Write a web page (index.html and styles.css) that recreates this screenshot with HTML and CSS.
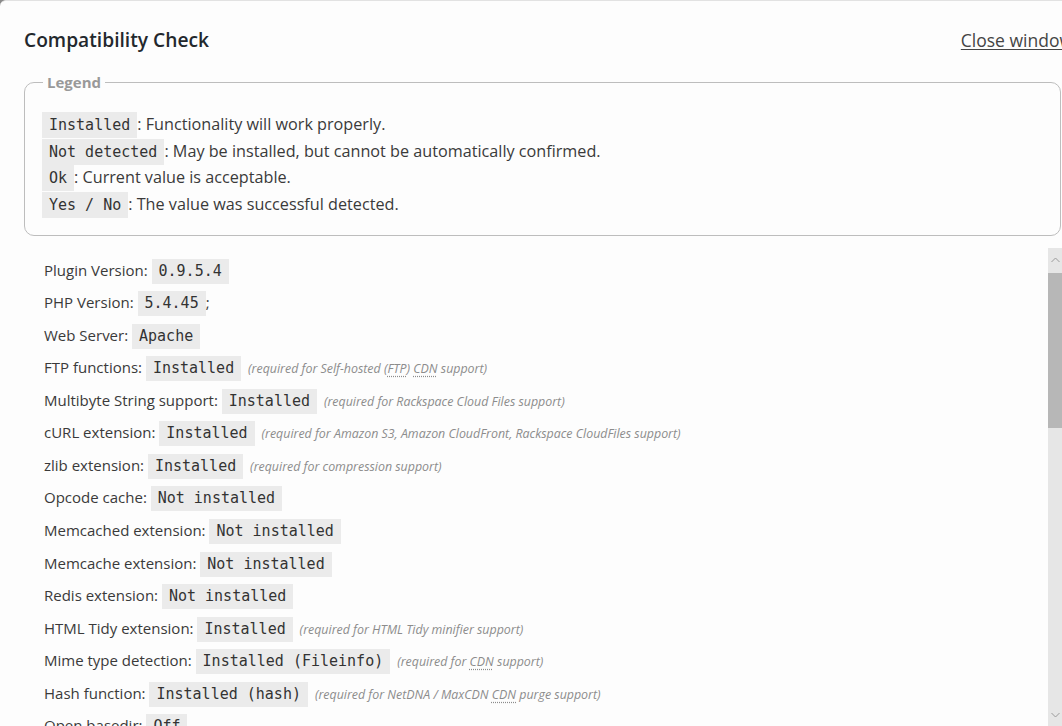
FILE: index.html
```html
<!DOCTYPE html>
<html lang="en">
<head>
<meta charset="utf-8">
<title>Compatibility Check</title>
<link rel="stylesheet" href="styles.css">
</head>
<body>
<div class="dialog">
  <header class="head">
    <h1 class="title">Compatibility Check</h1>
    <a class="close" href="#">Close window</a>
  </header>
  <fieldset class="legend-box">
    <legend class="legend-title">Legend</legend>
    <div class="legend-row"><code class="val">Installed</code>: Functionality will work properly.</div>
    <div class="legend-row"><code class="val">Not detected</code>: May be installed, but cannot be automatically confirmed.</div>
    <div class="legend-row"><code class="val">Ok</code>: Current value is acceptable.</div>
    <div class="legend-row"><code class="val">Yes / No</code>: The value was successful detected.</div>
  </fieldset>
  <div class="scroll">
    <ul class="checks">
      <li class="check">Plugin Version: <code class="val">0.9.5.4</code></li>
      <li class="check">PHP Version: <code class="val">5.4.45</code>;</li>
      <li class="check">Web Server: <code class="val">Apache</code></li>
      <li class="check">FTP functions: <code class="val">Installed</code> <span class="note">(required for Self-hosted (<abbr title="File Transfer Protocol">FTP</abbr>) <abbr title="Content Delivery Network">CDN</abbr> support)</span></li>
      <li class="check">Multibyte String support: <code class="val">Installed</code> <span class="note">(required for Rackspace Cloud Files support)</span></li>
      <li class="check">cURL extension: <code class="val">Installed</code> <span class="note">(required for Amazon S3, Amazon CloudFront, Rackspace CloudFiles support)</span></li>
      <li class="check">zlib extension: <code class="val">Installed</code> <span class="note">(required for compression support)</span></li>
      <li class="check">Opcode cache: <code class="val">Not installed</code></li>
      <li class="check">Memcached extension: <code class="val">Not installed</code></li>
      <li class="check">Memcache extension: <code class="val">Not installed</code></li>
      <li class="check">Redis extension: <code class="val">Not installed</code></li>
      <li class="check">HTML Tidy extension: <code class="val">Installed</code> <span class="note">(required for HTML Tidy minifier support)</span></li>
      <li class="check">Mime type detection: <code class="val">Installed (Fileinfo)</code> <span class="note">(required for <abbr title="Content Delivery Network">CDN</abbr> support)</span></li>
      <li class="check">Hash function: <code class="val">Installed (hash)</code> <span class="note">(required for NetDNA / MaxCDN <abbr title="Content Delivery Network">CDN</abbr> purge support)</span></li>
      <li class="check">Open basedir: <code class="val">Off</code></li>
      <li class="check">zlib output compression: <code class="val">Off</code></li>
      <li class="check">set_time_limit: <code class="val">Available</code></li>
    </ul>
    <div class="scrollbar">
      <div class="sb-btn"><svg width="9" height="6" viewBox="0 0 9 6"><path d="M0.5 5 L4.5 1 L8.5 5" fill="none" stroke="#9a9a9a" stroke-width="1"/></svg></div>
      <div class="sb-track"><div class="sb-thumb"></div></div>
      <div class="sb-btn"><svg width="9" height="6" viewBox="0 0 9 6"><path d="M0.5 1 L4.5 5 L8.5 1" fill="none" stroke="#9a9a9a" stroke-width="1"/></svg></div>
    </div>
  </div>
</div>
</body>
</html>
```

FILE: styles.css
```css
html, body {
  margin: 0;
  padding: 0;
  width: 1062px;
  height: 726px;
  overflow: hidden;
  background: #8a8a8a;
}

.dialog {
  box-sizing: border-box;
  width: 1080px;
  height: 740px;
  background: #fdfdfd;
  border-top: 1px solid #e2e2e2;
  border-top-left-radius: 6px;
  padding: 0 0 0 24px;
  font-family: "Open Sans", "Noto Sans", sans-serif;
  font-size: 15px;
  color: #3a3a3a;
}

.head {
  display: flex;
  align-items: baseline;
  width: 1046px;
  padding-top: 27px;
  height: 56px;
  box-sizing: border-box;
}

.title {
  margin: 0;
  font-size: 19.2px;
  font-weight: 600;
  color: #23282d;
  line-height: 24px;
}

.close {
  margin-left: auto;
  margin-right: -3px;
  color: #444;
  font-size: 17.5px;
  text-decoration: underline;
  text-underline-offset: 2px;
  white-space: nowrap;
}

.legend-box {
  box-sizing: border-box;
  width: 1037px;
  margin: 15px 0 0 0;
  padding: 19px 16px 17px 17px;
  border: 1px solid #bdbdbd;
  border-radius: 10px;
}

.legend-title {
  padding: 0 4px;
  margin-left: 1px;
  font-weight: 700;
  color: #999;
  font-size: 15px;
}

.legend-row {
  line-height: 26.7px;
  height: 26.7px;
  font-size: 16.2px;
  color: #3a3a3a;
}

.val {
  display: inline-block;
  background: #ebebeb;
  font-family: "DejaVu Sans Mono", "Liberation Mono", monospace;
  font-size: 15px;
  line-height: 25px;
  padding: 0 7px;
  color: #333;
}

.legend-row .val {
  line-height: 26px;
}

.scroll {
  display: flex;
  margin-top: 12px;
  height: 480px;
}

.checks {
  flex: 1;
  list-style: none;
  margin: 0;
  padding: 10px 0 0 20px;
  overflow: hidden;
}

.check {
  height: 32.54px;
  line-height: 25px;
  white-space: nowrap;
  font-size: 15px;
}

.note {
  font-style: italic;
  font-size: 12.4px;
  color: #8c8c8c;
  margin-left: 3px;
}

abbr {
  text-decoration: underline dotted;
  text-underline-offset: 3px;
}

.scrollbar {
  width: 14px;
  margin-right: 18px;
  display: flex;
  flex-direction: column;
  background: #e6e6e6;
}

.sb-btn {
  height: 25px;
  display: flex;
  align-items: center;
  justify-content: center;
}

.sb-track {
  flex: 1;
}

.sb-thumb {
  height: 155px;
  background: #b7b7b7;
}
```
